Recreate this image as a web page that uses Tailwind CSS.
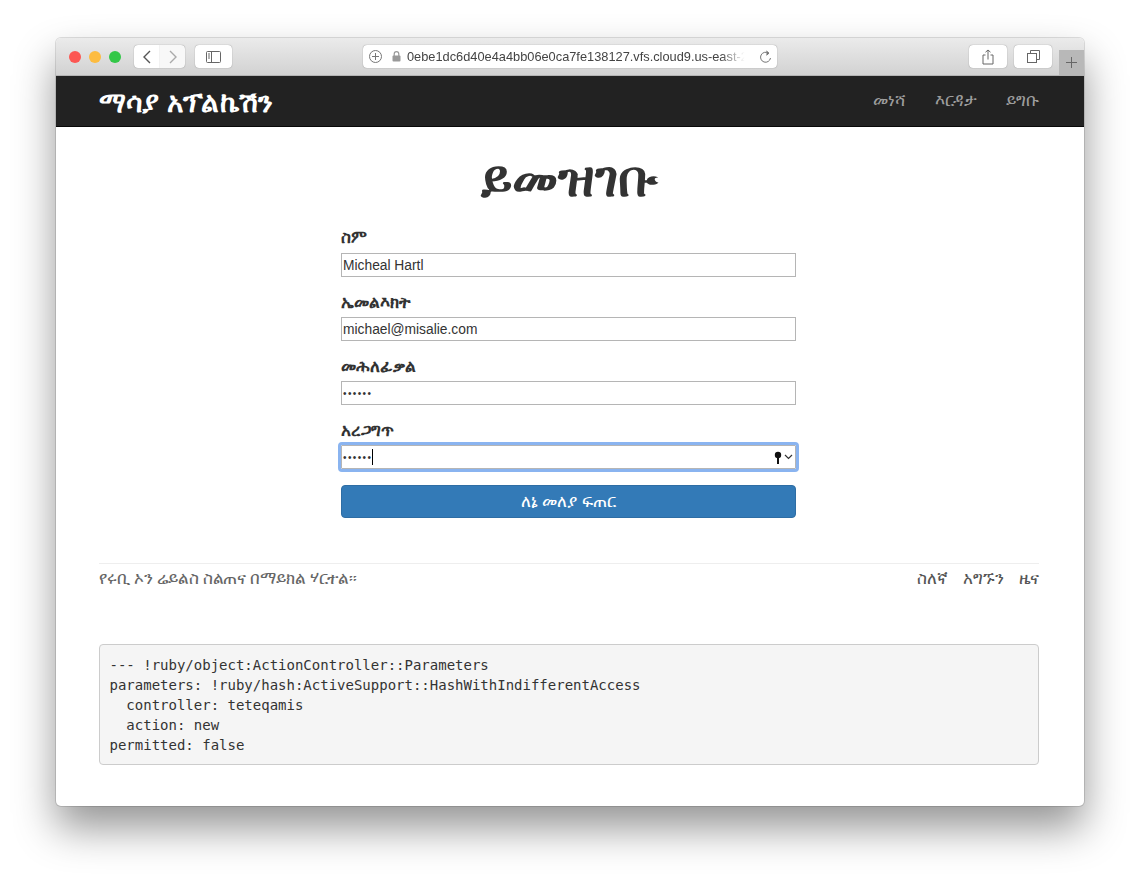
<!DOCTYPE html>
<html lang="en">
<head>
    <meta charset="UTF-8">
    <title>ይመዝገቡ</title>
    <script src="https://cdn.jsdelivr.net/npm/@tailwindcss/browser@4"></script>
</head>
<body class="bg-white font-['Noto_Sans','DejaVu_Sans',sans-serif] overflow-hidden">
<div class="w-[1140px] h-[880px] pl-[56px] pt-[38px]">

    <!-- Window -->
    <div class="w-[1028px] h-[768px] bg-white rounded-[5px] overflow-hidden shadow-[0_0_0_1px_rgba(0,0,0,0.12),0_22px_42px_rgba(0,0,0,0.42)]">

        <!-- Safari toolbar -->
        <div class="h-[38px] flex items-center bg-gradient-to-b from-[#ebebeb] to-[#d2d2d2] border-b border-[#b4b4b4]">
            <div class="flex gap-2 ml-[13px] w-[65px] shrink-0">
                <span class="w-3 h-3 rounded-full bg-[#fc5753]"></span>
                <span class="w-3 h-3 rounded-full bg-[#fdbc40]"></span>
                <span class="w-3 h-3 rounded-full bg-[#33c748]"></span>
            </div>
            <div class="flex">
                <div class="w-[26px] h-[23px] bg-white rounded-l-[4px] shadow-[0_0_1px_rgba(0,0,0,0.5)] flex items-center justify-center">
                    <svg width="10" height="14" viewBox="0 0 10 14" fill="none" stroke="#555" stroke-width="1.4"><path d="M8 1 2 7l6 6"/></svg>
                </div>
                <div class="w-[25px] h-[23px] bg-[#f8f8f8] rounded-r-[4px] shadow-[0_0_1px_rgba(0,0,0,0.5)] flex items-center justify-center">
                    <svg width="10" height="14" viewBox="0 0 10 14" fill="none" stroke="#aaa" stroke-width="1.4"><path d="m2 1 6 6-6 6"/></svg>
                </div>
            </div>
            <div class="ml-[10px] w-[37px] h-[23px] bg-white rounded-[4px] shadow-[0_0_1px_rgba(0,0,0,0.5)] flex items-center justify-center">
                <svg width="15" height="12" viewBox="0 0 15 12" fill="none" stroke="#666"><rect x=".5" y=".5" width="14" height="11" rx="1"/><path d="M5.5 .5v11M2 3h2M2 5h2M2 7h2"/></svg>
            </div>
            <!-- Address bar -->
            <div class="ml-[131px] w-[414px] h-[23px] bg-white rounded-[4px] shadow-[0_0_1px_rgba(0,0,0,0.5)] flex items-center pl-[6px] pr-[5px] text-[12.800px] text-[#444] font-['Liberation_Sans',sans-serif]">
                <svg class="shrink-0" width="13" height="13" viewBox="0 0 13 13" fill="none" stroke="#777"><circle cx="6.5" cy="6.5" r="6"/><path d="M6.5 3v7M3 6.5h7"/></svg>
                <svg class="shrink-0 ml-[10px]" width="9" height="11" viewBox="0 0 9 11" fill="#999"><rect x="0.5" y="4.5" width="8" height="6" rx="1"/><path d="M2.2 5V3a2.3 2.3 0 0 1 4.6 0v2" fill="none" stroke="#999" stroke-width="1.2"/></svg>
                <span class="ml-[6px] whitespace-nowrap shrink-0 [mask-image:linear-gradient(to_right,black_92%,transparent_99%)]">0ebe1dc6d40e4a4bb06e0ca7fe138127.vfs.cloud9.us-east-2</span>
                <svg class="shrink-0 ml-auto" width="13" height="14" viewBox="0 0 13 14" fill="none" stroke="#777"><path d="M9.5 3.2A5 5 0 1 0 11.5 8"/><path d="M7.5 1 10 3.2 7.5 5.2" fill="#777"/></svg>
            </div>
            <div class="ml-[192px] w-[38px] h-[23px] bg-white rounded-[4px] shadow-[0_0_1px_rgba(0,0,0,0.5)] flex items-center justify-center">
                <svg width="12" height="16" viewBox="0 0 12 16" fill="none" stroke="#666"><path d="M3.5 6H1v9h10V6H8.5M6 10.5V1M3.5 3.2 6 1l2.500 2.200"/></svg>
            </div>
            <div class="ml-[7px] w-[38px] h-[23px] bg-white rounded-[4px] shadow-[0_0_1px_rgba(0,0,0,0.5)] flex items-center justify-center">
                <svg width="13" height="13" viewBox="0 0 13 13" fill="none" stroke="#666"><rect x=".5" y="3.500" width="9" height="9"/><path d="M3.500 3.500v-3h9v9h-3"/></svg>
            </div>
            <div class="ml-[7px] w-[25px] h-[25px] self-end bg-[#b8b8b8] flex items-center justify-center">
                <svg width="13" height="13" viewBox="0 0 13 13" stroke="#666"><path d="M6.500 1v11M1 6.500h11"/></svg>
            </div>
        </div>

        <!-- Navbar -->
        <header class="h-[51px] bg-[#222] border-b border-[#080808] pl-[43px] pr-[45px] flex items-center justify-between">
            <a class="text-[28px] tracking-[0.200px] font-bold text-white">ማሳያ አፕልኬሽን</a>
            <nav class="flex gap-[29px] text-[17px] text-[#9d9d9d] -mt-[2px]">
                <a>መነሻ</a>
                <a>እርዳታ</a>
                <a>ይግቡ</a>
            </nav>
        </header>

        <!-- Main -->
        <main class="pl-[43px] pr-[45px] text-[#333]">
            <h1 class="text-[51px] leading-[46px] font-bold text-center pt-[26px]">ይመዝገቡ</h1>

            <form class="w-[455px] ml-[242px] mt-[28px]">
                <label class="block text-[17px] font-bold leading-[20px]">ስም</label>
                <input type="text" value="Micheal Hartl" class="block mt-[6px] w-full h-[24px] border border-[#b5b5b5] px-[1px] text-[13.800px] text-[#333] font-['Liberation_Sans',sans-serif]">
                <label class="block mt-[15px] text-[17px] font-bold leading-[20px]">ኤመልእክት</label>
                <input type="text" value="michael@misalie.com" class="block mt-[5px] w-full h-[24px] border border-[#b5b5b5] px-[1px] text-[13.800px] text-[#333] font-['Liberation_Sans',sans-serif]">
                <label class="block mt-[15px] text-[17px] font-bold leading-[20px]">መሕለፊቃል</label>
                <input type="password" value="foobar" class="block mt-[5px] w-full h-[24px] border border-[#b5b5b5] px-[1px] text-[10px] tracking-[1.400px] text-[#333] font-['Liberation_Sans',sans-serif]">
                <label class="block mt-[15px] text-[17px] font-bold leading-[20px]">አረጋግጥ</label>
                <div class="relative mt-[5px] w-full h-[24px] border border-[#b5b5b5] outline-3 outline-[#8ab4f0] rounded-[1px] px-[1px] flex items-center text-[10px] text-[#333] font-['Liberation_Sans',sans-serif]">
                    <span class="tracking-[1.400px]">••••••</span><span class="w-px h-[16px] bg-black"></span>
                    <svg class="ml-auto -translate-x-[1px]" width="8" height="13" viewBox="0 0 8 13" fill="#111"><circle cx="4" cy="4" r="3.200"/><rect x="3" y="5" width="2" height="8"/></svg>
                    <svg class="ml-[1px] mr-[1px]" width="9" height="6" viewBox="0 0 9 6" fill="none" stroke="#333" stroke-width="1.200"><path d="m1 1 3.500 3.500L8 1"/></svg>
                </div>
                <button type="button" class="block mt-[16px] w-full h-[33px] pb-[2px] bg-[#337ab7] border border-[#2e6da4] rounded-[4px] text-white text-[17px]">ለኔ መለያ ፍጠር</button>
            </form>

            <!-- Footer -->
            <footer class="mt-[45px] border-t border-[#eee] pt-[4px] flex justify-between text-[16.500px] leading-[20px] text-[#555]">
                <small class="text-[16.500px] tracking-[-0.100px] text-[#666]">የሩቢ ኦን ሬይልስ ስልጠና በማይክል ሃርተል።</small>
                <nav class="flex gap-[15px]">
                    <a>ስለኛ</a>
                    <a>አግኙን</a>
                    <a>ዜና</a>
                </nav>
            </footer>

            <pre class="mt-[56px] h-[121px] bg-[#f5f5f5] border border-[#ccc] rounded-[4px] px-[9.500px] py-[10px] text-[14px] leading-[20px] text-[#333] font-['DejaVu_Sans_Mono',monospace]">--- !ruby/object:ActionController::Parameters
parameters: !ruby/hash:ActiveSupport::HashWithIndifferentAccess
  controller: teteqamis
  action: new
permitted: false</pre>
        </main>
    </div>
</div>
</body>
</html>
